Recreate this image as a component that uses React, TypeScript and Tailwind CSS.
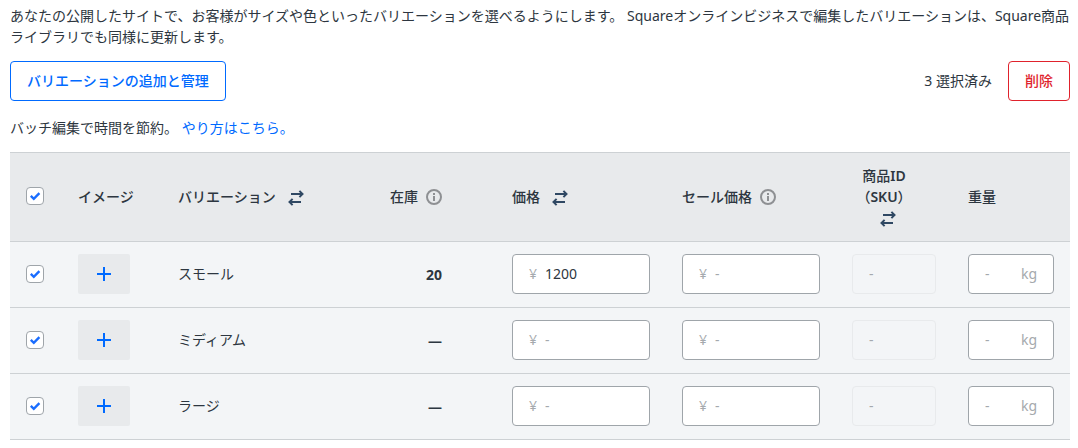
import React, { useState } from 'react'

interface Variation {
  id: string
  name: string
  stock: number | null
  price: string
}

const variations: Variation[] = [
  { id: 'small', name: 'スモール', stock: 20, price: '1200' },
  { id: 'medium', name: 'ミディアム', stock: null, price: '' },
  { id: 'large', name: 'ラージ', stock: null, price: '' },
]

const SwapIcon: React.FC = () => (
  <svg className="w-4 h-4 mt-1 shrink-0" viewBox="0 0 16 16" fill="none" stroke="#2f4863" strokeWidth="2">
    <path d="M3 4h11.5M11.4 0.9L14.5 4l-3.1 3.1" />
    <path d="M13 12H1.5M4.6 8.9L1.5 12l3.1 3.1" />
  </svg>
)

const InfoIcon: React.FC = () => (
  <svg className="w-4 h-4 mt-0.5 shrink-0" viewBox="0 0 16 16" fill="none" stroke="#8e9093" strokeWidth="2">
    <circle cx="8" cy="8" r="7" />
    <path d="M8 7v5M8 4v2" />
  </svg>
)

const PlusIcon: React.FC = () => (
  <svg className="w-3.5 h-3.5" viewBox="0 0 14 14" stroke="#006aff" strokeWidth="2">
    <path d="M7 0v14M0 7h14" />
  </svg>
)

interface CheckboxProps {
  label: string
  checked: boolean
  onChange: () => void
}

const Checkbox: React.FC<CheckboxProps> = ({ label, checked, onChange }) => (
  <label className="relative block w-[18px] h-[18px]">
    <input
      type="checkbox"
      aria-label={label}
      checked={checked}
      onChange={onChange}
      className="block appearance-none w-[18px] h-[18px] rounded border border-[#9fa5aa] bg-white"
    />
    {checked && (
      <svg
        className="absolute inset-0 w-[18px] h-[18px] pointer-events-none"
        viewBox="0 0 18 18"
        fill="none"
        stroke="#1a6dff"
        strokeWidth="2.4"
      >
        <path d="M4.8 8.9l3 2.9 5.6-5.6" />
      </svg>
    )}
  </label>
)

interface FieldProps {
  label: string
  prefix?: string
  suffix?: string
  defaultValue?: string
  disabled?: boolean
}

const Field: React.FC<FieldProps> = ({ label, prefix, suffix, defaultValue, disabled }) => (
  <label
    className={
      disabled
        ? 'flex items-center h-10 px-4 rounded border border-[#e8eaec]'
        : 'flex items-center h-10 px-4 rounded border border-[#9fa5aa] bg-white'
    }
  >
    {prefix && <span className="mr-2 text-[#a5a9ad]">{prefix}</span>}
    <input
      type="text"
      aria-label={label}
      placeholder="-"
      defaultValue={defaultValue}
      disabled={disabled}
      className="w-full min-w-0 bg-transparent outline-none placeholder:text-[#a5a9ad]"
    />
    {suffix && <span className="text-[#a5a9ad]">{suffix}</span>}
  </label>
)

const th = 'h-[90px] px-4 pb-0.5 border-y border-[#cdd1d4] font-medium'
const td = 'h-[66px] px-4 pb-0.5 border-b border-[#cdd1d4]'

const App: React.FC = () => {
  const [selected, setSelected] = useState<string[]>(variations.map((v) => v.id))
  const allSelected = selected.length === variations.length

  const toggle = (id: string) => {
    setSelected(selected.includes(id) ? selected.filter((s) => s !== id) : [...selected, id])
  }

  return (
    <main className="pl-2.5 pr-2 pt-[5px] pb-2 bg-white text-[#2d3640] text-sm leading-[21px] font-['Noto_Sans','Noto_Sans_CJK_JP',sans-serif]">
      <p>
        あなたの公開したサイトで、お客様がサイズや色といったバリエーションを選べるようにします。
        Squareオンラインビジネスで編集したバリエーションは、Square商品ライブラリでも同様に更新します。
      </p>

      <div className="flex items-center mt-3.5">
        <button
          type="button"
          className="h-10 px-4 pb-0.5 rounded border border-[#006aff] text-[#006aff] font-medium"
        >
          バリエーションの追加と管理
        </button>
        <span className="ml-auto mr-4 pb-0.5">{selected.length} 選択済み</span>
        <button
          type="button"
          className="h-10 px-4 pb-0.5 rounded border border-[#e0222c] text-[#e0222c] font-medium"
        >
          削除
        </button>
      </div>

      <p className="mt-4">
        バッチ編集で時間を節約。{' '}
        <a href="#how-to" className="text-[#006aff]">
          やり方はこちら。
        </a>
      </p>

      <table className="w-full mt-3.5 table-fixed border-separate border-spacing-0 text-left">
        <colgroup>
          <col className="w-[52px]" />
          <col className="w-[100px]" />
          <col />
          <col className="w-[150px]" />
          <col className="w-[170px]" />
          <col className="w-[170px]" />
          <col className="w-[116px]" />
          <col className="w-[118px]" />
        </colgroup>
        <thead className="bg-[#e8eaec]">
          <tr>
            <th className={th}>
              <Checkbox
                label="すべて選択"
                checked={allSelected}
                onChange={() => setSelected(allSelected ? [] : variations.map((v) => v.id))}
              />
            </th>
            <th className={th}>イメージ</th>
            <th className={th}>
              <button type="button" className="flex items-center gap-3">
                バリエーション
                <SwapIcon />
              </button>
            </th>
            <th className="h-[90px] pl-4 pr-[54px] pb-0.5 border-y border-[#cdd1d4] font-medium">
              <span className="flex items-center justify-end gap-2">
                在庫
                <InfoIcon />
              </span>
            </th>
            <th className={th}>
              <button type="button" className="flex items-center gap-3">
                価格
                <SwapIcon />
              </button>
            </th>
            <th className={th}>
              <span className="flex items-center gap-2">
                セール価格
                <InfoIcon />
              </span>
            </th>
            <th className={th}>
              <button type="button" className="flex flex-col items-center w-16">
                <span>
                  商品<span className="font-semibold">ID</span>
                </span>
                <span>
                  （<span className="font-semibold">SKU</span>）
                </span>
                <span className="flex items-center h-[21px] pl-2">
                  <SwapIcon />
                </span>
              </button>
            </th>
            <th className={th}>重量</th>
          </tr>
        </thead>
        <tbody className="bg-[#f3f5f7]">
          {variations.map((v) => (
            <tr key={v.id}>
              <td className={td}>
                <Checkbox
                  label={v.name}
                  checked={selected.includes(v.id)}
                  onChange={() => toggle(v.id)}
                />
              </td>
              <td className={td}>
                <button
                  type="button"
                  aria-label={`${v.name}の画像を追加`}
                  className="flex items-center justify-center w-[52px] h-10 rounded-xs bg-[#e8eaec]"
                >
                  <PlusIcon />
                </button>
              </td>
              <td className={td}>{v.name}</td>
              <td className="h-[66px] pl-4 pr-[54px] border-b border-[#cdd1d4] text-right font-bold">
                {v.stock ?? '—'}
              </td>
              <td className={td}>
                <Field label={`${v.name} 価格`} prefix="¥" defaultValue={v.price} />
              </td>
              <td className={td}>
                <Field label={`${v.name} セール価格`} prefix="¥" />
              </td>
              <td className={td}>
                <Field label={`${v.name} 商品ID (SKU)`} disabled />
              </td>
              <td className={td}>
                <Field label={`${v.name} 重量`} suffix="kg" />
              </td>
            </tr>
          ))}
        </tbody>
      </table>
    </main>
  )
}

export default App
